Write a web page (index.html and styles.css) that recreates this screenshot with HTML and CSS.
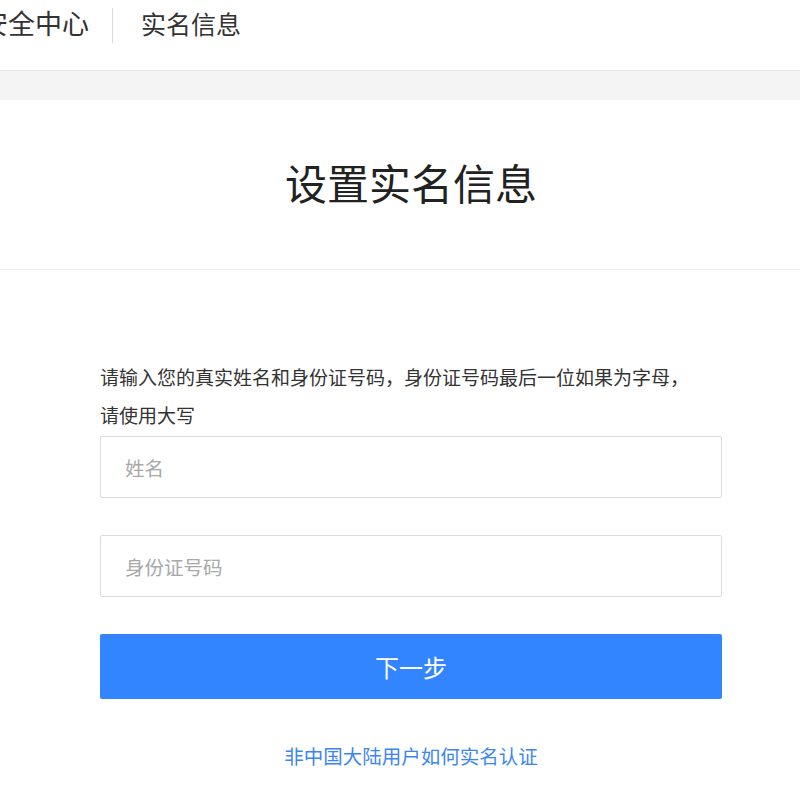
FILE: index.html
```html
<!DOCTYPE html>
<html lang="zh-CN">
<head>
<meta charset="utf-8">
<title>实名信息</title>
<link rel="stylesheet" href="styles.css">
</head>
<body>
<header class="top">
  <span class="brand">安全中心</span>
  <span class="sep"></span>
  <span class="crumb">实名信息</span>
</header>
<div class="band"></div>
<main class="page">
  <div class="title-wrap">
    <h1 class="title">设置实名信息</h1>
  </div>
  <div class="form">
    <p class="hint">请输入您的真实姓名和身份证号码，身份证号码最后一位如果为字母，请使用大写</p>
    <input class="field" type="text" placeholder="姓名">
    <input class="field field-id" type="text" placeholder="身份证号码">
    <button class="next" type="button">下一步</button>
    <a class="link" href="#">非中国大陆用户如何实名认证</a>
  </div>
</main>
</body>
</html>
```

FILE: styles.css
```css
* { box-sizing: border-box; }
html, body {
  margin: 0;
  padding: 0;
  background: #fff;
  font-family: "Microsoft YaHei", "Noto Sans CJK SC", sans-serif;
  overflow: hidden;
}
.top {
  height: 71px;
  display: flex;
  align-items: flex-start;
  padding-top: 5px;
  border-bottom: 1px solid #e6e6e6;
  overflow: hidden;
}
.brand {
  font-size: 27px;
  line-height: 36px;
  color: #333;
  margin-left: -19px;
  white-space: nowrap;
}
.sep {
  width: 1px;
  height: 35px;
  background: #d9d9d9;
  margin: 3px 28px 0 23px;
}
.crumb {
  font-size: 25px;
  line-height: 36px;
  color: #333;
  white-space: nowrap;
}
.band {
  height: 29px;
  background: #f4f4f4;
}
.title-wrap {
  height: 170px;
  border-bottom: 1px solid #ececec;
  display: flex;
  justify-content: center;
  padding-left: 22px;
  padding-top: 54px;
}
.title {
  margin: 0;
  font-size: 42px;
  line-height: 56px;
  font-weight: normal;
  color: #222;
}
.form {
  width: 622px;
  margin-left: 100px;
  padding-top: 88px;
  display: flex;
  flex-direction: column;
}
.hint {
  margin: 0;
  font-size: 19px;
  line-height: 38px;
  color: #333;
  width: 600px;
}
.field {
  display: block;
  height: 62px;
  width: 622px;
  border: 1px solid #dcdcdc;
  border-radius: 2px;
  padding: 0 24px;
  font-family: inherit;
  font-size: 19.5px;
  color: #333;
  outline: none;
  margin-top: 2px;
}
.field::placeholder { color: #a8a8a8; }
.field-id { margin-top: 37px; }
.next {
  margin-top: 37px;
  height: 65px;
  width: 622px;
  border: none;
  border-radius: 2px;
  background: #3385ff;
  color: #fff;
  font-family: inherit;
  font-size: 24px;
  cursor: pointer;
}
.link {
  margin-top: 42px;
  text-align: center;
  font-size: 19.5px;
  line-height: 30px;
  color: #3b86f3;
  text-decoration: none;
}
```
